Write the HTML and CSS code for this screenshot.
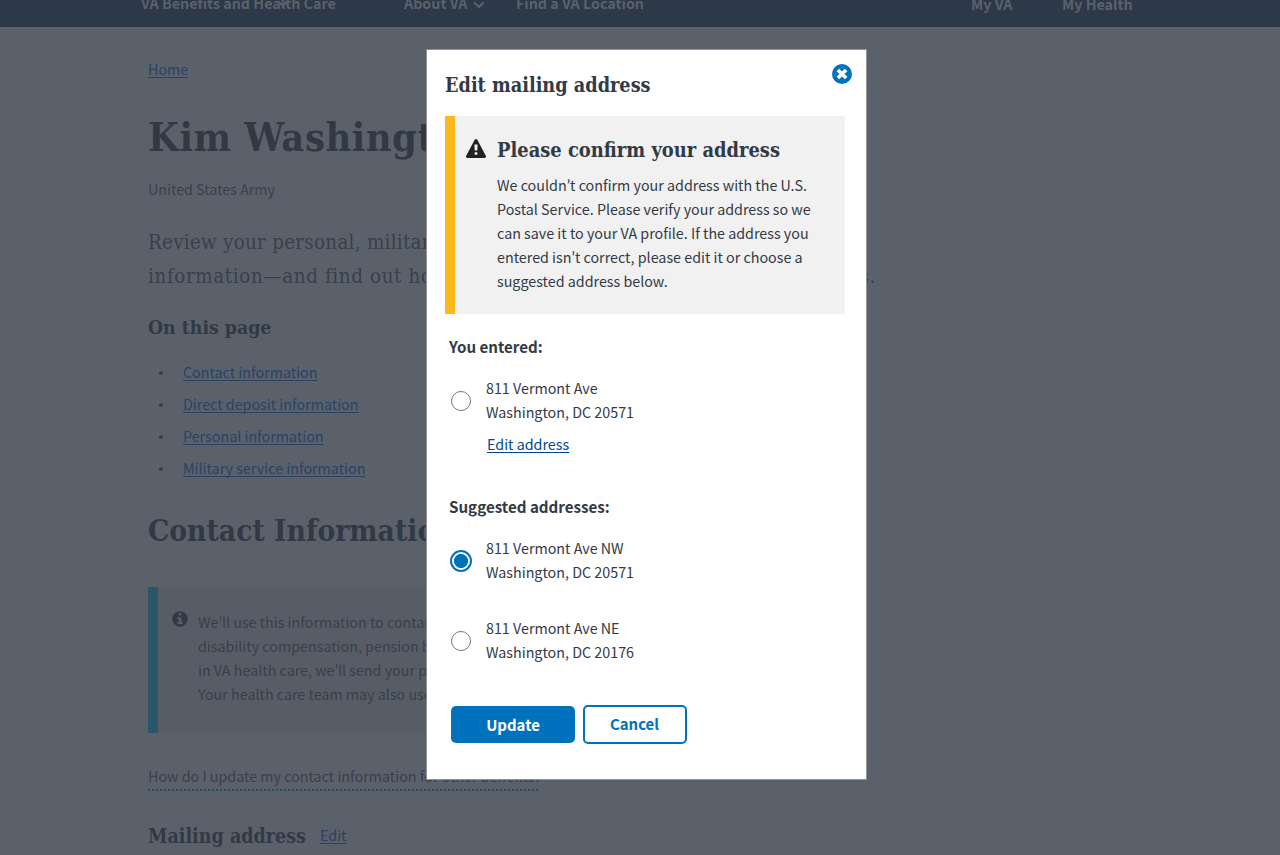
FILE: index.html
```
<!DOCTYPE html>
<html lang="en">
<head>
<meta charset="utf-8">
<title>Edit mailing address</title>
<link rel="stylesheet" href="styles.css">
</head>
<body>
<header class="nav">
  <span class="nav-item nav-benefits">VA Benefits and Health Care<svg class="nav-overlap" width="12" height="8" viewBox="0 0 12 8"><path d="M1.2 1.2 6 6l4.8-4.8"/></svg></span>
  <span class="nav-item nav-about">About VA<svg width="12" height="8" viewBox="0 0 12 8"><path d="M1.2 1.2 6 6l4.8-4.8"/></svg></span>
  <span class="nav-item">Find a VA Location</span>
  <span class="nav-item nav-my">My VA</span>
  <span class="nav-item nav-health">My Health</span>
</header>
<main class="page">
  <div class="crumb"><a class="link">Home</a></div>
  <h1 class="name">Kim Washington</h1>
  <p class="branch">United States Army</p>
  <div class="intro">
    <div class="intro-line intro-first"><span>Review your personal, military, and financial</span></div>
    <div class="intro-line intro-second"><span>information—and find out how to manage your VA</span><span>benefits.</span></div>
  </div>
  <h3 class="toc-title">On this page</h3>
  <ul class="toc">
    <li><a class="link">Contact information</a></li>
    <li><a class="link">Direct deposit information</a></li>
    <li><a class="link">Personal information</a></li>
    <li><a class="link">Military service information</a></li>
  </ul>
  <h2 class="section-title">Contact Information</h2>
  <div class="info">
    <svg class="info-icon" width="16" height="16" viewBox="0 0 16 16"><circle cx="8" cy="8" r="7.8"/><path d="M6.7 2.2h2.7v2.3H6.7zM5.4 6.2h4v4.9h1.3v1.8H5.4v-1.8h1.3V8H5.4z"/></svg>
    <p>We<span class="apos">’</span>ll use this information to contact you about your<br>disability compensation, pension benefits, and claims<br>in VA health care, we<span class="apos">’</span>ll send your prescriptions here.<br>Your health care team may also use it to contact you.</p>
  </div>
  <div class="expand"><span class="expand-text">How do I update my contact information for other benefits?</span><svg width="10" height="8" viewBox="0 0 10 8"><path d="M1 1.5 5 5.5l4-4"/></svg></div>
  <div class="mailing"><h3>Mailing address</h3><a class="link">Edit</a></div>
</main>

<section class="modal">
  <button class="close" aria-label="Close"><svg width="20" height="20" viewBox="0 0 20 20"><circle cx="10" cy="10" r="10"/><path d="m5.9 5.9 8.2 8.2M14.1 5.900l-8.200 8.200"/></svg></button>
  <h2 class="modal-title">Edit mailing address</h2>
  <div class="warning">
    <svg class="warning-icon" width="20" height="19" viewBox="0 0 20 19"><path class="tri" d="M10 0c.6 0 1 .3 1.3.8l8.5 16c.5 1-.1 2.2-1.3 2.2h-17C.3 19-.3 17.800.2 16.800L8.700.8C9 .3 9.400 0 10 0z"/><path class="mark" d="M8.400 5.600h3.200l-.3 6H8.700zM8.700 13.200h2.600v2.500H8.700z"/></svg>
    <div>
      <h3>Please confirm your address</h3>
      <p>We couldn<span class="apos">’</span>t confirm your address with the U.S.<br>Postal Service. Please verify your address so we<br>can save it to your VA profile. If the address you<br>entered isn<span class="apos">’</span>t correct, please edit it or choose a<br>suggested address below.</p>
    </div>
  </div>
  <h4 class="group">You entered:</h4>
  <div class="option"><span class="radio"></span><p>811 Vermont Ave<br>Washington, DC 20571</p></div>
  <div class="edit"><a class="link modal-link">Edit address</a></div>
  <h4 class="group suggested">Suggested addresses:</h4>
  <div class="option"><span class="radio checked"></span><p>811 Vermont Ave NW<br>Washington, DC 20571</p></div>
  <div class="option second"><span class="radio"></span><p>811 Vermont Ave NE<br>Washington, DC 20176</p></div>
  <div class="actions"><button class="btn primary">Update</button><button class="btn secondary">Cancel</button></div>
</section>
</body>
</html>
```
FILE: styles.css
```
* { box-sizing: border-box; }
html, body { height: 855px; overflow: hidden; }
body {
  margin: 0;
  position: relative;
  background: #5b616b;
  color: #393f4b;
  font: 14.3px/24px "Noto Sans CJK SC", sans-serif;
  white-space: nowrap;
}
h1, h2, h3, h4, p, ul { margin: 0; padding: 0; }
h1, h2, h3, .intro { font-family: "DejaVu Serif Condensed", "DejaVu Serif", serif; font-stretch: condensed; }
.apos { font-family: Lato, sans-serif; font-size: 16px; line-height: 1; }
.link {
  color: #294265;
  text-decoration: underline 1px;
  text-underline-offset: 2px;
  text-decoration-skip-ink: none;
}

.nav { height: 27px; background: #2d3848; color: #5b616b; display: flex; padding-left: 141px; font-weight: 700; overflow: hidden; }
.nav-item { height: 24px; margin-top: -9px; }
.nav svg path { fill: none; stroke: #5b616b; stroke-width: 2.2; }
.nav-benefits { width: 263px; position: relative; }
.nav-overlap { position: absolute; left: 136px; top: 9px; }
.nav-about { width: 112px; }
.nav-about svg { margin-left: 6px; }
.nav-my { margin: -8px 0 0 auto; width: 91px; }
.nav-health { margin-top: -8px; width: 218px; }

.page { padding: 30px 0 0 148px; }
.name { margin-top: 31px; font-size: 39.500px; line-height: 50px; letter-spacing: .5px; color: #323945; }
.branch { margin-top: 15px; }
.intro { margin-top: 24px; width: 728px; font-size: 20.400px; line-height: 34px; }
.intro-line { display: flex; justify-content: space-between; }
.intro-first { letter-spacing: .26px; }
.intro-second { letter-spacing: .6px; }
.toc-title { margin-top: 20px; font-size: 19.3px; line-height: 30px; color: #323945; }
.toc { margin-top: 13px; list-style: none; line-height: 32px; }
.toc li { display: flex; align-items: center; padding-left: 11px; }
.toc li::before { content: ""; width: 4px; height: 4px; margin: 2px 20px 0 0; border-radius: 50%; background: #393f4b; }
.section-title { margin-top: 27px; font-size: 29.7px; line-height: 40px; color: #323945; }
.info { margin-top: 36px; width: 640px; height: 146px; border-left: 10px solid #2a566a; background: #575d67; display: flex; padding: 23px 0 0 14px; }
.info-icon { margin: 1px 10px 0 0; fill: #323945; }
.info-icon path { fill: #575d67; }
.expand { margin-top: 31px; height: 27px; display: flex; }
.expand-text { width: 390px; border-bottom: 2px dotted #294a69; }
.expand svg { margin: 10px 0 0 13px; }
.expand svg path { fill: none; stroke: #294265; stroke-width: 1.5; }
.mailing { margin-top: 31px; display: flex; align-items: flex-start; }
.mailing h3 { width: 172px; font-size: 19.5px; line-height: 30px; color: #323945; }
.mailing .link { margin-top: 1px; }

.modal { position: absolute; left: 426px; top: 49px; width: 441px; height: 731px; padding: 21px 18px 0; background: #fff; border: 1px solid #919296; color: #323a45; }
.close { position: absolute; right: 14px; top: 14px; padding: 0; border: 0; background: none; display: flex; }
.close circle { fill: #0071bc; }
.close path { stroke: #fff; stroke-width: 3.6; }
.modal-title { font-size: 19.7px; line-height: 30px; }
.warning { margin-top: 15px; width: 400px; height: 198px; border-left: 10px solid #fdb81e; background: #f1f1f1; display: flex; padding: 19px 0 0 11px; }
.warning-icon { margin: 4px 11px 0 0; }
.tri { fill: #212121; }
.mark { fill: #f1f1f1; }
.warning h3 { font-size: 19.9px; line-height: 30px; margin-bottom: 8px; }
.group { margin: 20px 0 0 4px; font-size: 15.15px; }
.option { margin: 18px 0 0 4px; display: flex; align-items: flex-start; }
.option p { margin-left: 13px; }
.radio { width: 20px; height: 20px; margin: 15px 2px 0; border: 1px solid #757575; border-radius: 50%; background: #fff; }
.radio.checked { width: 22px; height: 22px; margin: 14px 1px 0; border: 2px solid #0071bc; background: radial-gradient(circle, #0071bc 6.700px, #fff 7.300px); }
.edit { margin: 8px 0 0 42px; }
.modal-link { color: #004795; }
.suggested { margin-top: 38px; }
.second { margin-top: 32px; }
.actions { margin: 41px 0 0 6px; display: flex; align-items: center; gap: 8px; }
.btn { font: 700 14.95px/24px "Noto Sans CJK SC", sans-serif; border-radius: 5px; padding: 0; }
.primary { width: 124px; height: 37px; border: 0; background: #0071bc; color: #fff; }
.secondary { width: 104px; height: 39px; padding: 0 1px 2px 0; border: 2px solid #0071bc; background: #fff; color: #0071bc; }
```
